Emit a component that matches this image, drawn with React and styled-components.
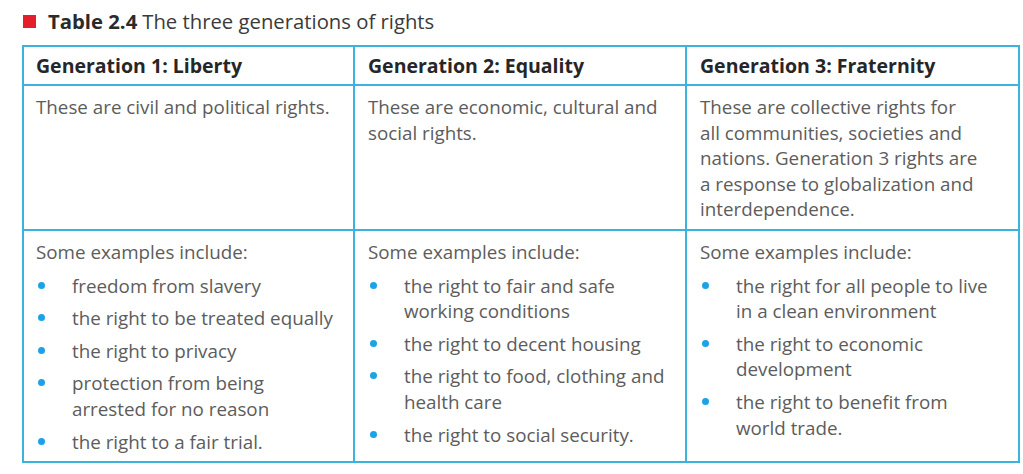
import React from "react";
import styled, { createGlobalStyle } from "styled-components";

const Global = createGlobalStyle`
  html, body { margin: 0; padding: 0; background: #fff; }
  body { font-family: "Open Sans", "Noto Sans", sans-serif; }
`;

const Page = styled.div`
  padding: 9px 0 0 22px;
  width: 996px;
`;

const Caption = styled.div`
  display: flex;
  align-items: center;
  gap: 12px;
  font-size: 20.3px;
  color: #3a3a3a;
  height: 24px;
  margin-bottom: 12px;
`;

const Square = styled.span`
  width: 13px;
  height: 13px;
  background: #e41e2b;
  margin-left: 1px;
`;

const CaptionLabel = styled.b`
  font-weight: 700;
  color: #2a2a2a;
  margin-right: 5px;
`;

const Table = styled.table`
  border-collapse: collapse;
  width: 996px;
  table-layout: fixed;
`;

const Col = styled.col`
  width: ${(p) => p.$w}px;
`;

const Th = styled.th`
  border: 2px solid #3cb2df;
  text-align: left;
  font-weight: 700;
  font-size: 19.5px;
  color: #262626;
  height: 37px;
  padding: 0 0 0 ${(p) => p.$pad}px;
  vertical-align: middle;
  white-space: nowrap;
`;

const Td = styled.td`
  border: 2px solid #3cb2df;
  vertical-align: top;
  font-size: 18.8px;
  line-height: 25.6px;
  color: #5c5c5c;
  padding: ${(p) => p.$top}px 4px 0 ${(p) => p.$pad}px;
  height: ${(p) => p.$h}px;
  box-sizing: border-box;
  white-space: nowrap;
`;

const List = styled.ul`
  list-style: none;
  margin: 8px 0 0;
  padding: 0;
  display: flex;
  flex-direction: column;
  gap: 7px;
`;

const Item = styled.li`
  display: grid;
  grid-template-columns: 36px 1fr;
`;

const Dot = styled.span`
  width: 7px;
  height: 7px;
  border-radius: 50%;
  background: #1ea2e6;
  margin: 8px 0 0 2px;
`;

const cols = [
  {
    head: "Generation 1: Liberty",
    desc: "These are civil and political rights.",
    items: [
      "freedom from slavery",
      "the right to be treated equally",
      "the right to privacy",
      ["protection from being", "arrested for no reason"],
      "the right to a fair trial.",
    ],
    pad: 12,
  },
  {
    head: "Generation 2: Equality",
    desc: ["These are economic, cultural and", "social rights."],
    items: [
      ["the right to fair and safe", "working conditions"],
      "the right to decent housing",
      ["the right to food, clothing and", "health care"],
      "the right to social security.",
    ],
    pad: 13,
  },
  {
    head: "Generation 3: Fraternity",
    desc: [
      "These are collective rights for",
      "all communities, societies and",
      "nations. Generation 3 rights are",
      "a response to globalization and",
      "interdependence.",
    ],
    items: [
      ["the right for all people to live", "in a clean environment"],
      ["the right to economic", "development"],
      ["the right to benefit from", "world trade."],
    ],
    pad: 13,
  },
];

const Lines = ({ text }) =>
  Array.isArray(text)
    ? text.map((t, i) => (
        <React.Fragment key={i}>
          {i > 0 && <br />}
          {t}
        </React.Fragment>
      ))
    : text;

export default function App() {
  return (
    <Page>
      <Global />
      <Caption>
        <Square />
        <span>
          <CaptionLabel>Table 2.4</CaptionLabel>The three generations of rights
        </span>
      </Caption>
      <Table>
        <colgroup>
          <Col $w={331} />
          <Col $w={332} />
          <Col $w={333} />
        </colgroup>
        <thead>
          <tr>
            {cols.map((c) => (
              <Th key={c.head} $pad={c.pad}>
                {c.head}
              </Th>
            ))}
          </tr>
        </thead>
        <tbody>
          <tr>
            {cols.map((c) => (
              <Td key={c.head} $pad={c.pad} $top={9} $h={145}>
                <Lines text={c.desc} />
              </Td>
            ))}
          </tr>
          <tr>
            {cols.map((c) => (
              <Td key={c.head} $pad={c.pad} $top={9} $h={232}>
                Some examples include:
                <List>
                  {c.items.map((it, i) => (
                    <Item key={i}>
                      <Dot />
                      <span>
                        <Lines text={it} />
                      </span>
                    </Item>
                  ))}
                </List>
              </Td>
            ))}
          </tr>
        </tbody>
      </Table>
    </Page>
  );
}
